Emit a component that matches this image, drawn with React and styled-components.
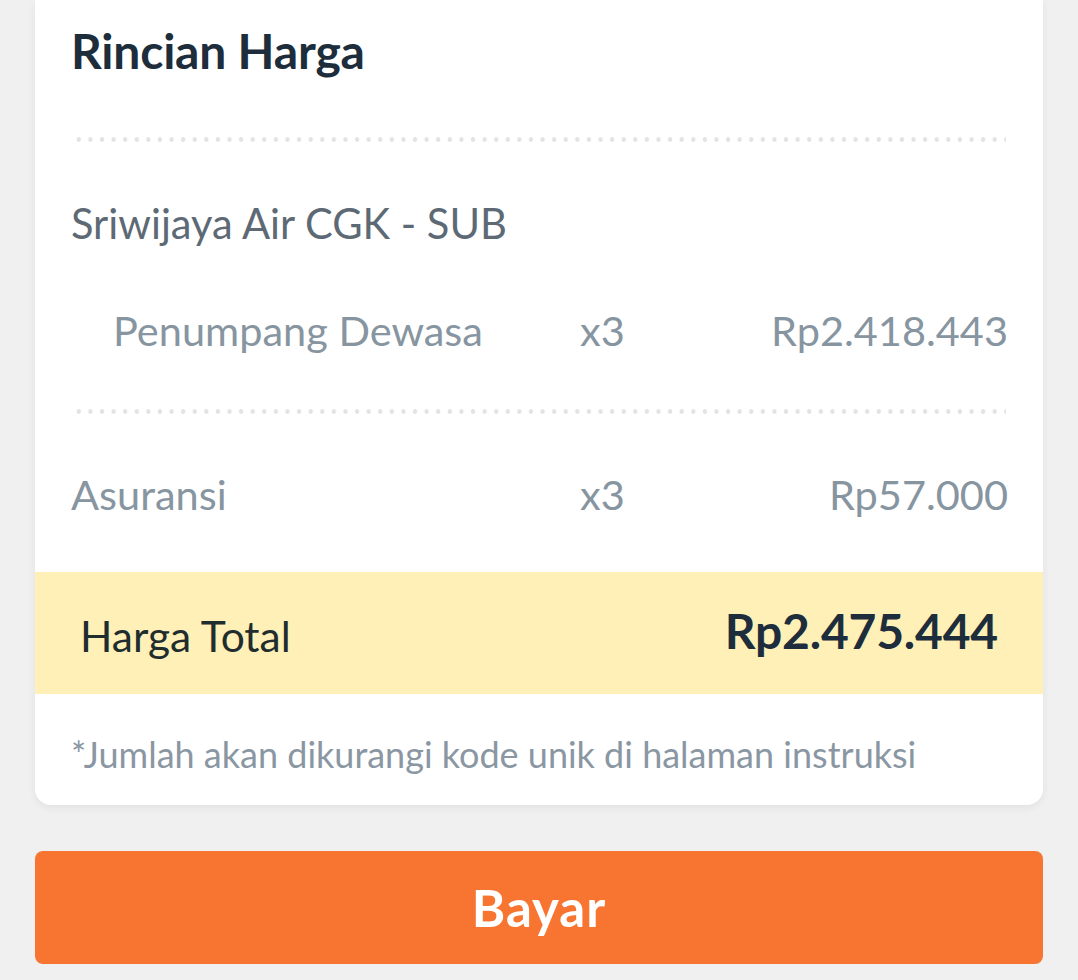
import React from "react";
import styled, { createGlobalStyle } from "styled-components";

const Global = createGlobalStyle`
  html, body { margin: 0; padding: 0; background: #f0f0f0; }
  body { font-family: Lato, "Open Sans", sans-serif; }
`;

const Page = styled.div`
  padding: 0 35px 16px;
  display: flex;
  flex-direction: column;
`;

const Card = styled.section`
  background: #ffffff;
  border-radius: 0 0 16px 16px;
  box-shadow: 0 3px 8px rgba(0, 0, 0, 0.06);
  display: flex;
  flex-direction: column;
  padding-bottom: 31px;
`;

const Title = styled.h2`
  margin: 0;
  padding: 23px 36px 0;
  font-size: 48px;
  line-height: 56px;
  font-weight: 700;
  color: #1d2d3c;
  letter-spacing: -0.2px;
`;

const Dots = styled.div`
  margin: ${(p) => p.$mt}px 37px 0 38px;
  height: 5px;
  background-image: radial-gradient(circle, #e3e3e3 2px, transparent 2.6px);
  background-size: 11.6px 5px;
  background-repeat: repeat-x;
`;

const Airline = styled.div`
  margin-top: ${(p) => p.$mt}px;
  padding: 0 36px;
  font-size: 41.6px;
  line-height: 50px;
  color: #5d6a75;
`;

const Row = styled.div`
  margin-top: ${(p) => p.$mt}px;
  padding: 0 35px 0 36px;
  display: grid;
  grid-template-columns: 509px auto 1fr;
  align-items: center;
  font-size: 41.5px;
  line-height: 50px;
  color: #8795a1;
`;

const Label = styled.span`
  padding-left: ${(p) => (p.$indent ? 42 : 0)}px;
`;

const Qty = styled.span``;

const Price = styled.span`
  justify-self: end;
`;

const TotalBand = styled.div`
  margin-top: 53px;
  height: 122px;
  background: #fef0b6;
  display: flex;
  align-items: center;
  justify-content: space-between;
  padding: 0 45px 0 45px;
`;

const TotalLabel = styled.span`
  font-size: 42.5px;
  color: #1f2d2f;
  margin-top: 4px;
`;

const TotalValue = styled.span`
  font-size: 48px;
  font-weight: 700;
  color: #1d2d3c;
  letter-spacing: -0.2px;
  margin-bottom: 6px;
`;

const Note = styled.p`
  margin: 40px 0 0;
  padding: 0 36px;
  font-size: 36px;
  line-height: 40px;
  color: #8a97a3;
`;

const PayButton = styled.button`
  margin-top: 46px;
  height: 113px;
  border: none;
  border-radius: 8px;
  background: #f77431;
  color: #ffffff;
  font-family: Lato, "Open Sans", sans-serif;
  font-size: 51px;
  font-weight: 700;
  letter-spacing: 1px;
  cursor: pointer;
`;

export default function App() {
  return (
    <>
      <Global />
      <Page>
        <Card>
          <Title>Rincian Harga</Title>
          <Dots $mt={58} />
          <Airline $mt={56}>Sriwijaya Air CGK - SUB</Airline>
          <Row $mt={57}>
            <Label $indent>Penumpang Dewasa</Label>
            <Qty>x3</Qty>
            <Price>Rp2.418.443</Price>
          </Row>
          <Dots $mt={54} />
          <Row $mt={55}>
            <Label>Asuransi</Label>
            <Qty>x3</Qty>
            <Price>Rp57.000</Price>
          </Row>
          <TotalBand>
            <TotalLabel>Harga Total</TotalLabel>
            <TotalValue>Rp2.475.444</TotalValue>
          </TotalBand>
          <Note>*Jumlah akan dikurangi kode unik di halaman instruksi</Note>
        </Card>
        <PayButton>Bayar</PayButton>
      </Page>
    </>
  );
}
